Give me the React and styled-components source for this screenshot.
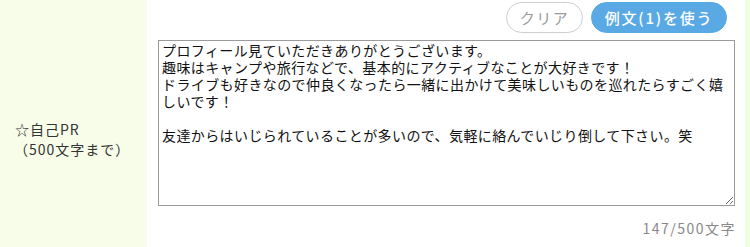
import React from 'react'
import styled, { createGlobalStyle } from 'styled-components'

const GlobalStyle = createGlobalStyle`
  html, body {
    margin: 0;
    padding: 0;
    background: #ffffff;
  }
  body {
    font-family: "Noto Sans CJK JP", "Noto Sans", sans-serif;
    color: #333;
  }
`

const FONT = `"Noto Sans CJK JP", "Noto Sans", sans-serif`

// ── Table row ────────────────────────────────────────────────────────────────
const Row = styled.div`
  display: flex;
  width: 750px;
  height: 247px;
  overflow: hidden;
`

const LabelCell = styled.div`
  width: 147px;
  flex-shrink: 0;
  background: #f8fde9;
  padding: 119px 0 0 15px;
  box-sizing: border-box;
`

const LabelLine = styled.div`
  font-family: ${FONT};
  font-size: 14px;
  line-height: 20px;
  letter-spacing: 1px;
  color: #333;
  margin-left: ${({ $indent }) => $indent || '0'};
`

const FieldCell = styled.div`
  flex: 1;
  background: #ffffff;
  padding: 2px 10px 0 11px;
  display: flex;
  flex-direction: column;
  box-sizing: border-box;
`

const EdgeCell = styled.div`
  width: 5px;
  flex-shrink: 0;
  background: #effde1;
`

// ── Buttons ──────────────────────────────────────────────────────────────────
const Toolbar = styled.div`
  display: flex;
  justify-content: flex-end;
  gap: 8px;
  padding-right: 8px;
`

const PillButton = styled.button`
  height: 31px;
  box-sizing: border-box;
  border-radius: 16px;
  font-family: ${FONT};
  font-size: 15px;
  font-weight: ${({ $primary }) => ($primary ? 500 : 400)};
  letter-spacing: ${({ $primary }) => ($primary ? '1.8px' : '1.5px')};
  padding: 0;
  width: ${({ $width }) => $width};
  cursor: pointer;
  background: ${({ $primary }) => ($primary ? '#59a9e5' : '#ffffff')};
  color: ${({ $primary }) => ($primary ? '#ffffff' : '#9a9a9a')};
  border: ${({ $primary }) => ($primary ? '1px solid #59a9e5' : '1px solid #cfcfcf')};
`

// ── Text area ────────────────────────────────────────────────────────────────
const PrArea = styled.textarea`
  margin-top: 7px;
  width: 100%;
  height: 166px;
  box-sizing: border-box;
  border: 1px solid #9b9b9b;
  border-radius: 0;
  padding: 1px 3px;
  font-family: ${FONT};
  font-size: 14px;
  line-height: 17px;
  letter-spacing: 0.4px;
  color: #111;
  resize: vertical;
  outline: none;
`

const Counter = styled.div`
  margin-top: 12px;
  text-align: right;
  font-family: ${FONT};
  font-size: 14px;
  line-height: 20px;
  color: #888;
  letter-spacing: 1.5px;
  margin-right: -1px;
`

const sample = `プロフィール見ていただきありがとうございます。
趣味はキャンプや旅行などで、基本的にアクティブなことが大好きです！
ドライブも好きなので仲良くなったら一緒に出かけて美味しいものを巡れたらすごく嬉しいです！

友達からはいじられていることが多いので、気軽に絡んでいじり倒して下さい。笑
`

// line breaks are sent as CRLF, so each one counts as two characters
const countChars = (s) => s.length + (s.match(/\n/g) || []).length

export default function App() {
  const [text, setText] = React.useState(sample)

  return (
    <>
      <GlobalStyle />
      <Row>
        <LabelCell>
          <LabelLine>☆自己PR</LabelLine>
          <LabelLine $indent="-1px">（500文字まで）</LabelLine>
        </LabelCell>
        <FieldCell>
          <Toolbar>
            <PillButton $width="77px" onClick={() => setText('')}>クリア</PillButton>
            <PillButton $primary $width="136px" onClick={() => setText(sample)}>
              例文(1)を使う
            </PillButton>
          </Toolbar>
          <PrArea value={text} onChange={(e) => setText(e.target.value)} />
          <Counter>{countChars(text)}/500文字</Counter>
        </FieldCell>
        <EdgeCell />
      </Row>
    </>
  )
}
